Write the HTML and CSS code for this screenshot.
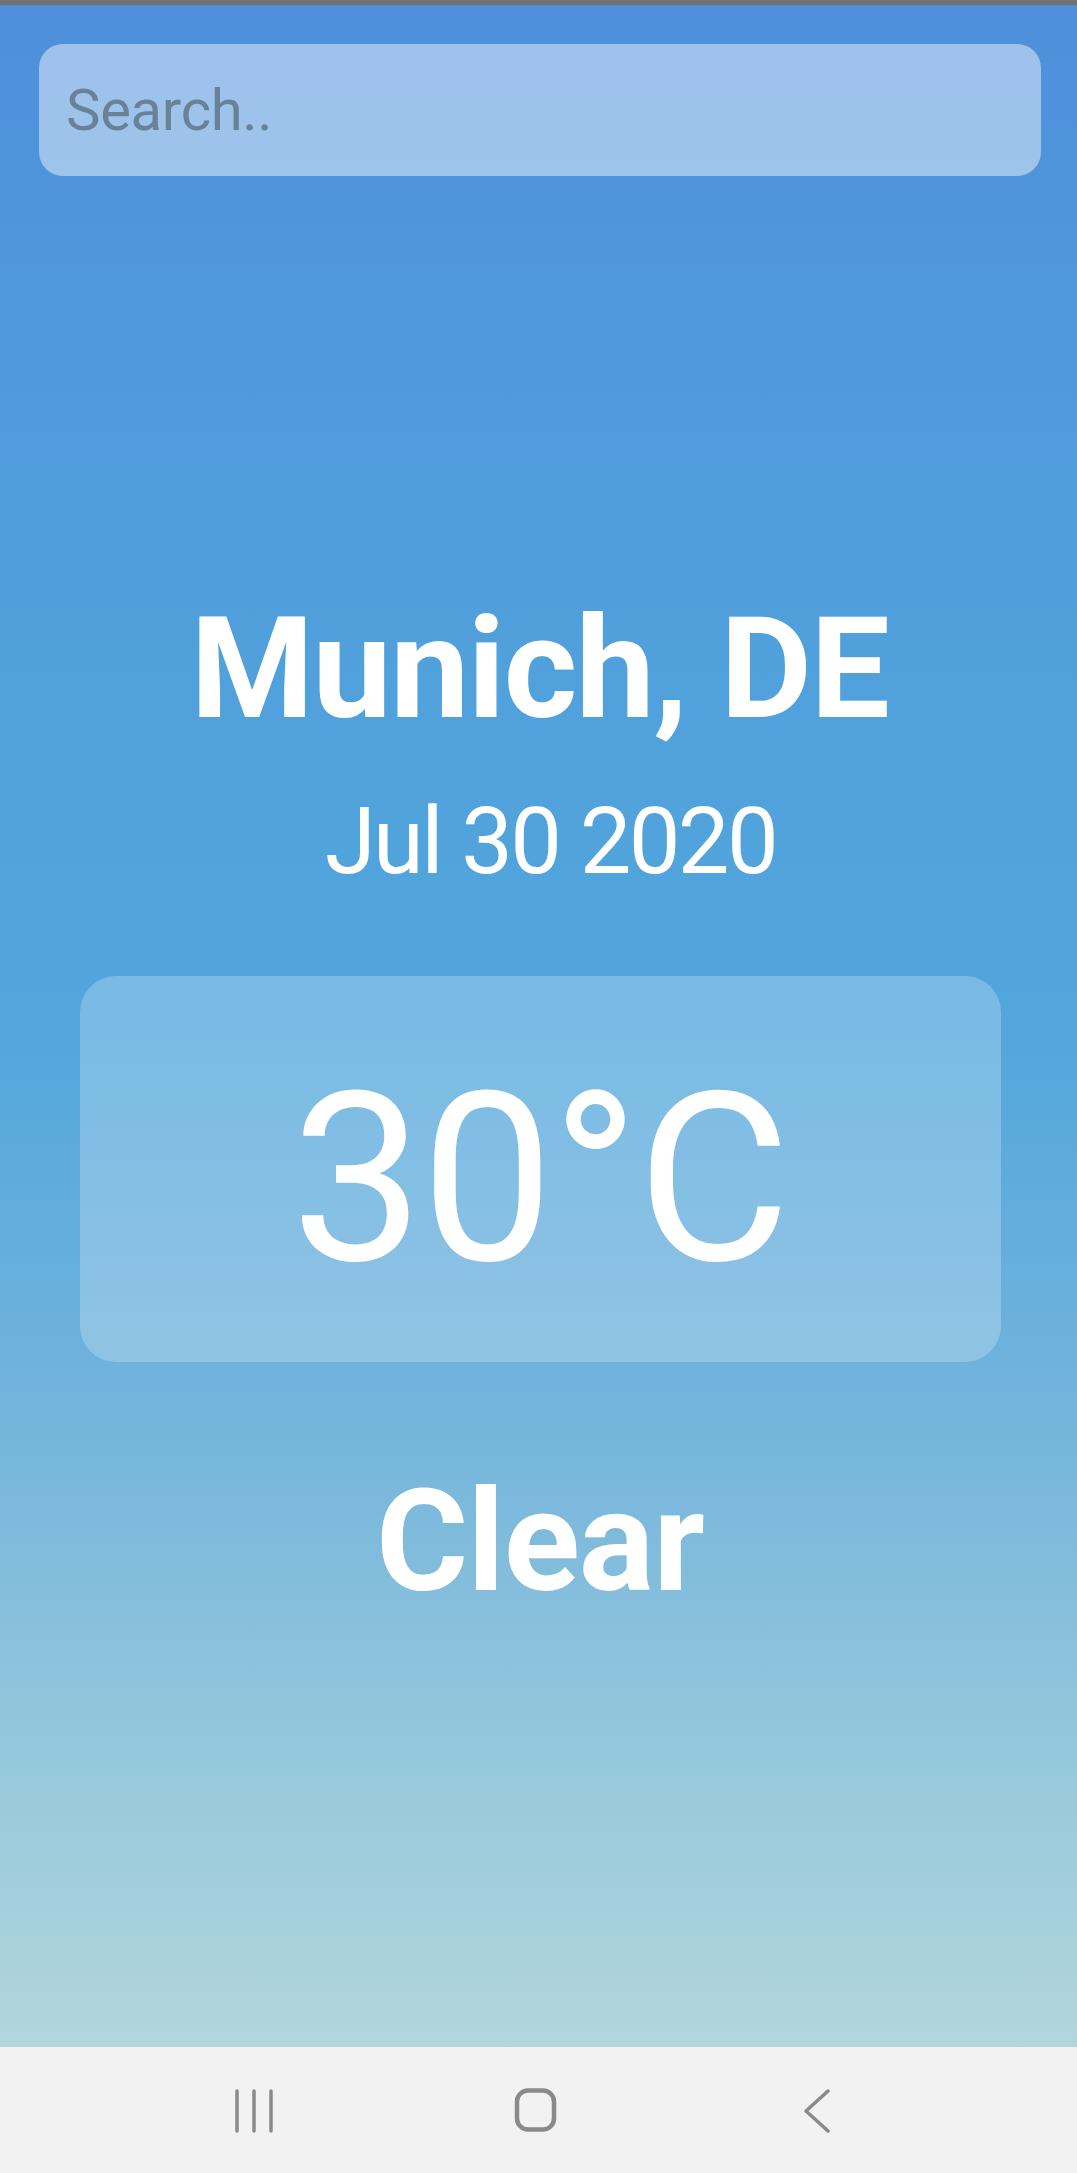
FILE: index.html
```html
<!DOCTYPE html>
<html lang="en">
<head>
<meta charset="utf-8">
<title>Weather</title>
<link rel="stylesheet" href="styles.css">
</head>
<body>
<div class="status-strip"></div>
<main class="app">
  <div class="search-box">
    <input class="search-input" type="text" placeholder="Search..">
  </div>
  <h1 class="city">Munich, DE</h1>
  <div class="date">Jul 30 2020</div>
  <div class="temp-card">
    <div class="temp">30°C</div>
  </div>
  <div class="condition">Clear</div>
</main>
<nav class="nav-bar">
  <div class="nav-slot">
    <svg width="40" height="44" viewBox="0 0 40 44" class="nav-icon">
      <line x1="2" y1="2" x2="2" y2="42"/>
      <line x1="19" y1="2" x2="19" y2="42"/>
      <line x1="36" y1="2" x2="36" y2="42"/>
    </svg>
  </div>
  <div class="nav-slot">
    <svg width="44" height="46" viewBox="0 0 44 46" class="nav-icon">
      <rect x="3" y="2.5" width="37" height="39" rx="11" ry="11" class="home"/>
    </svg>
  </div>
  <div class="nav-slot">
    <svg width="30" height="44" viewBox="0 0 30 44" class="nav-icon">
      <polyline points="26,2 4,22 26,42"/>
    </svg>
  </div>
</nav>
</body>
</html>
```
FILE: styles.css
```css
html, body {
  margin: 0;
  padding: 0;
}
body {
  width: 1077px;
  height: 2173px;
  font-family: Roboto, "Noto Sans", "Liberation Sans", sans-serif;
  overflow: hidden;
}
.status-strip {
  height: 5px;
  background: #727272;
}
.app {
  height: 2042px;
  box-sizing: border-box;
  padding-top: 39px;
  display: flex;
  flex-direction: column;
  align-items: stretch;
  background: linear-gradient(180deg,
    #4f8fdb 0%,
    #509edc 25%,
    #52a6dc 50%,
    #75b5dc 70%,
    #98c9dc 87%,
    #b2d6dc 100%);
  color: #ffffff;
}
.search-box {
  margin: 0 36px 0 39px;
  height: 132px;
  border-radius: 24px;
  background: rgba(255, 255, 255, 0.45);
  display: flex;
  align-items: center;
  padding-left: 27px;
}
.search-input {
  flex: 1;
  border: none;
  outline: none;
  background: transparent;
  font-family: Roboto, "Noto Sans", "Liberation Sans", sans-serif;
  font-size: 58px;
  letter-spacing: -0.3px;
  color: #4b5f73;
  padding: 0;
  margin: 0;
}
.search-input::placeholder {
  color: #6a8298;
  opacity: 1;
}
.city {
  margin: 422px 0 0 0;
  font-size: 141px;
  line-height: 141px;
  font-weight: 700;
  letter-spacing: -1.4px;
  text-align: center;
  padding-left: 2px;
}
.date {
  margin-top: 56px;
  font-size: 92px;
  line-height: 94px;
  font-weight: 400;
  letter-spacing: -2.6px;
  text-align: center;
  padding-left: 24px;
}
.temp-card {
  margin: 87px 76px 0 80px;
  height: 386px;
  box-sizing: border-box;
  padding-top: 22px;
  border-radius: 36px;
  background: rgba(255, 255, 255, 0.23);
  display: flex;
  align-items: center;
  justify-content: center;
}
.temp {
  font-size: 236px;
  line-height: 236px;
  font-weight: 400;
  letter-spacing: -2.5px;
  padding-right: 2px;
}
.condition {
  margin-top: 109px;
  font-size: 141px;
  line-height: 141px;
  font-weight: 700;
  letter-spacing: -1px;
  text-align: center;
  padding-left: 3px;
}
.nav-bar {
  height: 126px;
  background: #f2f2f2;
  display: flex;
  justify-content: center;
  align-items: center;
  padding-right: 6px;
  padding-top: 2px;
  box-sizing: border-box;
}
.nav-slot {
  width: 281px;
  display: flex;
  justify-content: center;
  align-items: center;
}
.nav-icon {
  stroke: #8a8a8a;
  fill: none;
  stroke-width: 3.5;
  stroke-linecap: round;
  stroke-linejoin: round;
}
.nav-icon .home {
  stroke-width: 4.5;
}
```
